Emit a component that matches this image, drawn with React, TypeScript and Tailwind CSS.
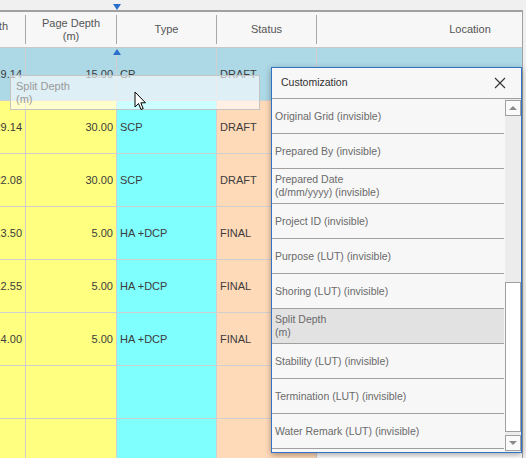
import React from 'react';

type Row = { a: string; d: string; t: string; s: string; sel?: boolean };

const rows: Row[] = [
  { a: '19.14', d: '15.00', t: 'CP', s: 'DRAFT', sel: true },
  { a: '29.14', d: '30.00', t: 'SCP', s: 'DRAFT' },
  { a: '22.08', d: '30.00', t: 'SCP', s: 'DRAFT' },
  { a: '13.50', d: '5.00', t: 'HA +DCP', s: 'FINAL' },
  { a: '12.55', d: '5.00', t: 'HA +DCP', s: 'FINAL' },
  { a: '14.00', d: '5.00', t: 'HA +DCP', s: 'FINAL' },
  { a: '', d: '', t: '', s: '' },
  { a: '', d: '', t: '', s: '' },
];

const fields: { label: string; sub?: string; active?: boolean }[] = [
  { label: 'Original Grid (invisible)' },
  { label: 'Prepared By (invisible)' },
  { label: 'Prepared Date', sub: '(d/mm/yyyy) (invisible)' },
  { label: 'Project ID (invisible)' },
  { label: 'Purpose (LUT) (invisible)' },
  { label: 'Shoring (LUT) (invisible)' },
  { label: 'Split Depth', sub: '(m)', active: true },
  { label: 'Stability (LUT) (invisible)' },
  { label: 'Termination (LUT) (invisible)' },
  { label: 'Water Remark (LUT) (invisible)' },
  { label: '' },
];

const HeaderSep = () => <div className="w-px my-[3px] bg-[#a8a8a8] shrink-0" />;

const Customization: React.FC = () => (
  <div className="absolute left-[271px] top-[67px] w-[251px] h-[386px] border border-[#2f74c4] bg-[#f7f7f7] shadow-[0_2px_6px_rgba(0,0,0,0.35)] flex flex-col">
    <div className="h-[31px] shrink-0 border-b border-[#a0a0a0] flex items-center justify-between pl-[9px] pr-[15px]">
      <span className="text-[10.5px] text-[#303030]">Customization</span>
      <svg width="12" height="12" viewBox="0 0 12 12">
        <path d="M1 1 L11 11 M11 1 L1 11" stroke="#333" strokeWidth="1.1" fill="none" />
      </svg>
    </div>
    <div className="flex flex-1 min-h-0">
      <div className="flex-1 overflow-hidden">
        {fields.map((f, i) => (
          <div
            key={i}
            className={`h-[35px] border-b border-[#a0a0a0] flex flex-col justify-center pl-[3px] text-[10.5px] leading-[13px] text-[#6a6a6a] ${f.active ? 'bg-[#e2e2e2]' : ''}`}
          >
            <span>{f.label}</span>
            {f.sub && <span>{f.sub}</span>}
          </div>
        ))}
      </div>
      <div className="w-[16px] ml-[1px] bg-[#ececec] flex flex-col py-[1px]">
        <div className="h-[16px] border border-[#a0a0a0] bg-[#fafafa] flex items-center justify-center">
          <div className="w-0 h-0 border-l-[4px] border-r-[4px] border-b-[4px] border-l-transparent border-r-transparent border-b-[#8a8a8a]" />
        </div>
        <div className="h-[166px]" />
        <div className="h-[150px] border border-[#a0a0a0] bg-white" />
        <div className="flex-1" />
        <div className="h-[16px] border border-[#a0a0a0] bg-[#fafafa] flex items-center justify-center">
          <div className="w-0 h-0 border-l-[4px] border-r-[4px] border-t-[4px] border-l-transparent border-r-transparent border-t-[#8a8a8a]" />
        </div>
      </div>
    </div>
  </div>
);

const App: React.FC = () => {
  return (
    <div
      className="relative w-[526px] h-[458px] overflow-hidden bg-[#f0f0f0] text-[11px]"
      style={{ fontFamily: '"Liberation Sans", Arial, sans-serif' }}
    >
      <div className="h-[10px]" />
      <div className="w-[523px] h-[448px] border-t-2 border-r border-[#a0a0a0] overflow-hidden bg-white">
        {/* header */}
        <div className="h-[36px] flex border-b border-[#c8c8c8] bg-[#f7f7f7] text-[#555]">
          <div className="w-[25px] shrink-0 overflow-hidden flex justify-end items-start pt-[6px] pr-[17px] whitespace-nowrap">
            Depth
          </div>
          <HeaderSep />
          <div className="w-[90px] shrink-0 flex flex-col items-center justify-center leading-[13px]">
            <span>Page Depth</span>
            <span>(m)</span>
          </div>
          <HeaderSep />
          <div className="w-[99px] shrink-0 flex items-center justify-center">Type</div>
          <HeaderSep />
          <div className="w-[99px] shrink-0 flex items-center justify-center">Status</div>
          <HeaderSep />
          <div className="w-[306px] shrink-0 flex items-center justify-center">Location</div>
        </div>
        {/* rows */}
        {rows.map((r, i) => (
          <div key={i} className="h-[53px] flex border-b border-[#d0d0d0] text-[#3c3c3c]">
            <div className={`w-[26px] shrink-0 border-r border-[#d0d0d0] overflow-hidden flex items-center justify-end pr-[3px] whitespace-nowrap ${r.sel ? 'bg-[#add8e6]' : 'bg-[#ffff80]'}`}>
              {r.a}
            </div>
            <div className={`w-[91px] shrink-0 border-r border-[#d0d0d0] flex items-center justify-end pr-[3px] ${r.sel ? 'bg-[#add8e6]' : 'bg-[#ffff80]'}`}>
              {r.d}
            </div>
            <div className={`w-[100px] shrink-0 border-r border-[#d0d0d0] flex items-center pl-[3px] ${r.sel ? 'bg-[#add8e6]' : 'bg-[#80ffff]'}`}>
              {r.t}
            </div>
            <div className={`w-[100px] shrink-0 border-r border-[#d0d0d0] flex items-center pl-[3px] ${r.sel ? 'bg-[#add8e6]' : 'bg-[#ffdab9]'}`}>
              {r.s}
            </div>
            <div className={`w-[306px] shrink-0 ${r.sel ? 'bg-[#add8e6]' : 'bg-white'}`} />
          </div>
        ))}
      </div>

      {/* column drop markers */}
      <div className="absolute left-[113px] top-[4px] w-0 h-0 border-l-[4px] border-r-[4px] border-t-[6px] border-l-transparent border-r-transparent border-t-[#2a6fc9]" />
      <div className="absolute left-[113px] top-[49px] w-0 h-0 border-l-[4px] border-r-[4px] border-b-[6px] border-l-transparent border-r-transparent border-b-[#2a6fc9]" />

      {/* dragged column */}
      <div className="absolute left-[10px] top-[75px] w-[250px] h-[35px] border border-[#c4c4c4] bg-white/60 pl-[5px] pt-[4px] leading-[13px] text-[#9a9a9a]">
        <div>Split Depth</div>
        <div>(m)</div>
      </div>

      {/* cursor */}
      <svg className="absolute left-[134px] top-[91px]" width="14" height="21" viewBox="0 0 14 21">
        <path d="M1 1 L1 16 L4.5 12.5 L7 18.5 L9.2 17.6 L6.8 11.8 L11.5 11.8 Z" fill="white" stroke="black" strokeWidth="1" strokeLinejoin="miter" />
      </svg>

      <Customization />
    </div>
  );
};

export default App;
